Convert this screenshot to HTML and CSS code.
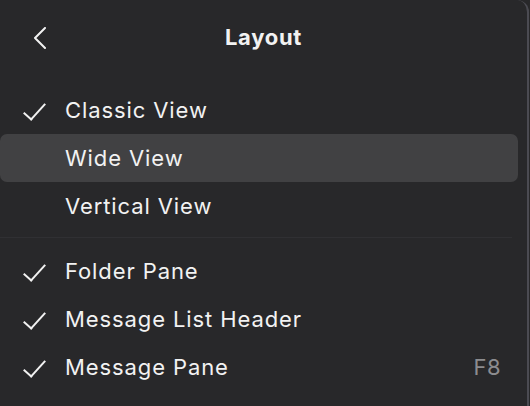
FILE: index.html
```html
<!DOCTYPE html>
<html lang="en">
<head>
  <meta charset="UTF-8" />
  <title>Layout</title>
  <link rel="stylesheet" href="styles.css">
</head>
<body>
  <div class="panel">
    <div class="header">
      <button class="back" aria-label="Back">
        <svg width="14" height="22" viewBox="0 0 14 22"><path d="M12 1 L2 11 L12 21" fill="none" stroke="#f2f2f2" stroke-width="2" stroke-linecap="round" stroke-linejoin="round"/></svg>
      </button>
      <h2>Layout</h2>
    </div>

    <ul class="menu">
      <li class="item checked"><span class="check"></span>Classic View</li>
      <li class="item active"><span class="check"></span>Wide View</li>
      <li class="item"><span class="check"></span>Vertical View</li>
    </ul>
    <div class="divider"></div>
    <ul class="menu">
      <li class="item checked"><span class="check"></span>Folder Pane</li>
      <li class="item checked"><span class="check"></span>Message List Header</li>
      <li class="item checked"><span class="check"></span>Message Pane<span class="key">F8</span></li>
    </ul>
  </div>
</body>
</html>
```

FILE: styles.css
```css
body {
  margin: 0;
  background: #28282a;
  font-family: Inter, "Noto Sans", sans-serif;
  color: #f2f2f2;
}
.panel {
  width: 527px;
  height: 406px;
  background: #28282a;
  border-right: 2px solid #4b4b52;
  border-top-right-radius: 12px;
  box-sizing: content-box;
}
.header {
  height: 76px;
  display: flex;
  align-items: center;
  justify-content: center;
  position: relative;
}
.header h2 {
  margin: 0;
  font-size: 22px;
  font-weight: 700;
  letter-spacing: 0.7px;
  position: relative;
  top: -1px;
}
.back {
  position: absolute;
  left: 33px;
  top: 27px;
  background: none;
  border: 0;
  padding: 0;
  width: 14px;
  height: 22px;
}
.menu {
  list-style: none;
  margin: 0;
  padding: 0;
}
.menu:first-of-type {
  margin-top: 10px;
}
.item {
  height: 48px;
  display: flex;
  align-items: center;
  font-size: 22px;
  letter-spacing: 0.9px;
  margin-right: 9px;
  border-radius: 7px;
}
.item.active {
  background: #414143;
}
.check {
  width: 65px;
  flex: none;
  position: relative;
  align-self: stretch;
}
.checked .check::after {
  content: "";
  position: absolute;
  left: 29px;
  top: 12px;
  width: 9px;
  height: 20px;
  border-right: 2px solid #f2f2f2;
  border-bottom: 2px solid #f2f2f2;
  transform: rotate(42deg);
}
.key {
  margin-left: auto;
  margin-right: 17px;
  color: #8c8c8f;
  letter-spacing: 0.4px;
}
.divider {
  height: 1px;
  background: #303033;
  margin: 7px 15px 9px 0;
}
```
